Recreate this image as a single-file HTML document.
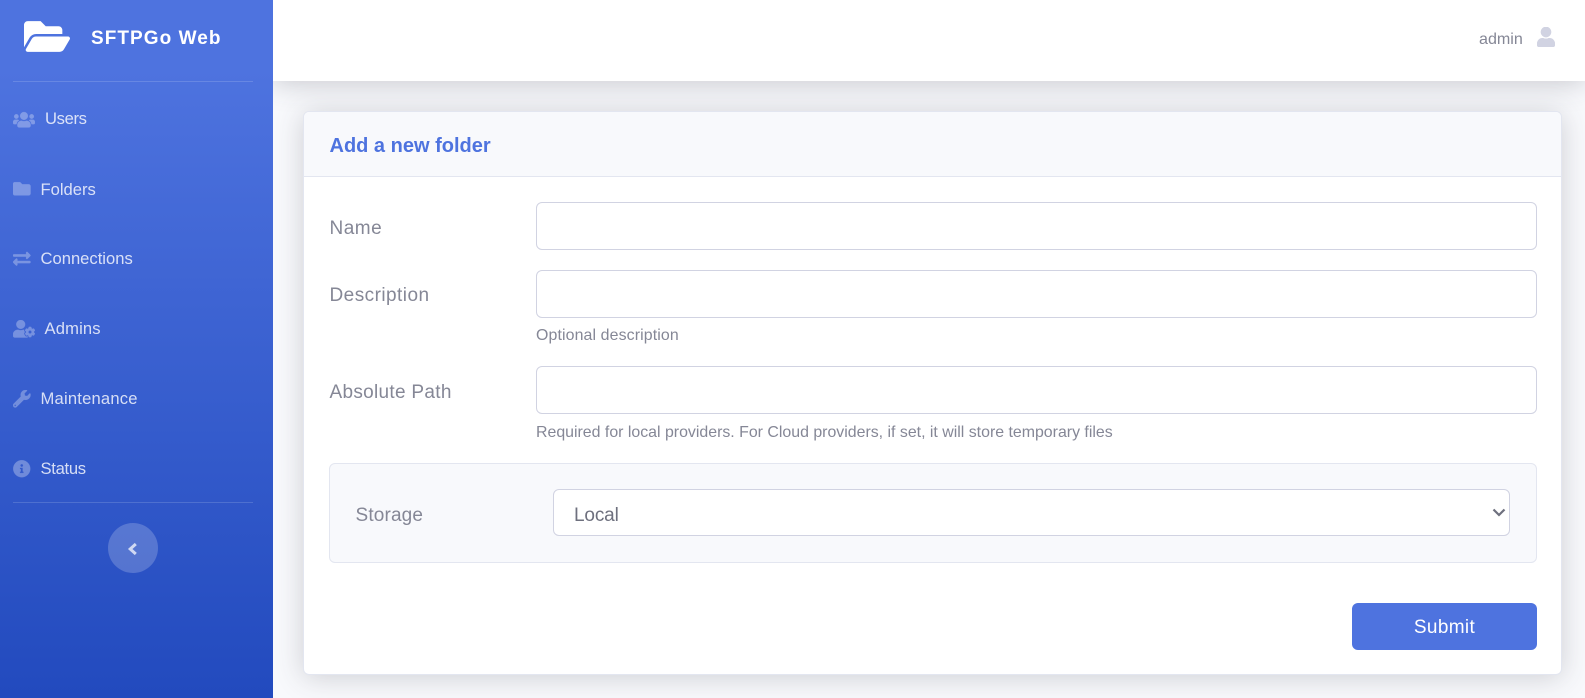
<!DOCTYPE html>
<html><head><meta charset="utf-8"><title>SFTPGo Web</title>
<style>
*{box-sizing:border-box}
html,body{margin:0;padding:0;width:1585px;height:698px;overflow:hidden;background:#f8f9fc;font-family:"Liberation Sans",sans-serif}
.a{position:absolute}
.t{position:absolute;white-space:nowrap;line-height:24px;height:24px}
#side{left:0;top:0;width:273px;height:698px;background:linear-gradient(180deg,#4e73df 10%,#224abe 100%)}
.hr{position:absolute;left:13px;width:240px;height:1px;background:rgba(255,255,255,.15)}
.nav{color:rgba(255,255,255,.8);font-size:16.6px}
svg.i{position:absolute;fill:#fff;stroke:#fff;stroke-width:10;opacity:.3}
.lab{color:#858796;font-size:19px}
.help{color:#858796;font-size:15.9px}
.in{position:absolute;background:#fff;border:1px solid #d1d3e2;border-radius:6px}
</style></head><body>
<div class="a" style="left:273px;top:0;width:1312px;height:81px;background:#fff;box-shadow:0 2px 28px rgba(58,59,69,.26)"></div>
<div class="a" id="side"></div>

<svg class="a" style="left:24px;top:15.500px;width:46px;height:41px;fill:#fff" viewBox="0 0 576 512"><path d="M572.694 292.093L500.27 416.248A63.997 63.997 0 0 1 444.989 448H45.025c-18.523 0-30.064-20.093-20.731-36.093l72.424-124.155A64 64 0 0 1 152 256h399.964c18.523 0 30.064 20.093 20.73 36.093zM152 224h328v-48c0-26.51-21.49-48-48-48H272l-64-64H48C21.49 64 0 85.49 0 112v278.046l69.077-118.418C86.214 242.25 117.989 224 152 224z"/></svg>
<div class="t" style="left:91px;top:26.500px;color:#fff;font-weight:700;font-size:19px;letter-spacing:1.05px">SFTPGo Web</div>
<div class="hr" style="top:81px"></div>

<svg class="i" style="left:13px;top:111px;width:22px;height:17.500px" viewBox="0 0 640 512"><path d="M96 224c35.300 0 64-28.700 64-64s-28.700-64-64-64-64 28.700-64 64 28.700 64 64 64zm448 0c35.300 0 64-28.700 64-64s-28.700-64-64-64-64 28.700-64 64 28.700 64 64 64zm32 32h-64c-17.600 0-33.500 7.100-45.100 18.600 40.300 22.100 68.900 62 75.100 109.400h66c17.700 0 32-14.300 32-32v-32c0-35.300-28.700-64-64-64zm-256 0c61.900 0 112-50.100 112-112S381.900 32 320 32 208 82.100 208 144s50.100 112 112 112zm76.800 32h-8.300c-20.800 10-43.900 16-68.500 16s-47.600-6-68.500-16h-8.300C179.600 288 128 339.600 128 403.200V432c0 26.500 21.500 48 48 48h288c26.500 0 48-21.500 48-48v-28.800c0-63.600-51.600-115.200-115.200-115.200zm-223.700-13.400C161.500 263.100 145.600 256 128 256H64c-35.300 0-64 28.700-64 64v32c0 17.700 14.300 32 32 32h65.900c6.300-47.400 34.900-87.300 75.200-109.400z"/></svg>
<div class="t nav" style="left:45px;top:107px;letter-spacing:-.35px">Users</div>

<svg class="i" style="left:13px;top:180px;width:17.500px;height:17.500px" viewBox="0 0 512 512"><path d="M464 128H272l-64-64H48C21.490 64 0 85.490 0 112v288c0 26.510 21.490 48 48 48h416c26.510 0 48-21.490 48-48V176c0-26.510-21.490-48-48-48z"/></svg>
<div class="t nav" style="left:40.500px;top:177.500px">Folders</div>

<svg class="i" style="left:13px;top:250px;width:17.500px;height:17.500px" viewBox="0 0 512 512"><path d="M0 168v-16c0-13.255 10.745-24 24-24h360V80c0-21.367 25.899-32.042 40.971-16.971l80 80c9.372 9.373 9.372 24.569 0 33.941l-80 80C409.956 271.982 384 261.456 384 240v-48H24c-13.255 0-24-10.745-24-24zm488 152H128v-48c0-21.314-25.862-32.080-40.971-16.971l-80 80c-9.372 9.373-9.372 24.569 0 33.941l80 80C102.057 463.997 128 453.437 128 432v-48h360c13.255 0 24-10.745 24-24v-16c0-13.255-10.745-24-24-24z"/></svg>
<div class="t nav" style="left:40.500px;top:247px">Connections</div>

<svg class="i" style="left:13px;top:320px;width:22px;height:17.500px" viewBox="0 0 640 512"><path d="M610.500 373.300c2.600-14.100 2.600-28.500 0-42.600l25.800-14.900c3-1.700 4.300-5.200 3.300-8.500-6.700-21.600-18.200-41.200-33.200-57.400-2.300-2.500-6-3.100-9-1.400l-25.800 14.900c-10.900-9.300-23.400-16.500-36.900-21.300v-29.800c0-3.400-2.400-6.400-5.700-7.100-22.300-5-45-4.800-66.200 0-3.300.7-5.700 3.700-5.700 7.100v29.800c-13.500 4.800-26 12-36.900 21.300l-25.800-14.900c-2.900-1.700-6.700-1.100-9 1.400-15 16.200-26.500 35.800-33.200 57.400-1 3.300.4 6.800 3.300 8.500l25.800 14.900c-2.600 14.100-2.600 28.500 0 42.600l-25.800 14.900c-3 1.700-4.300 5.200-3.300 8.500 6.700 21.600 18.200 41.100 33.200 57.400 2.300 2.500 6 3.100 9 1.400l25.800-14.900c10.900 9.300 23.400 16.500 36.900 21.300v29.800c0 3.400 2.400 6.400 5.700 7.100 22.300 5 45 4.800 66.200 0 3.300-.7 5.700-3.700 5.700-7.100v-29.800c13.500-4.800 26-12 36.900-21.300l25.800 14.900c2.900 1.700 6.700 1.100 9-1.400 15-16.200 26.500-35.800 33.200-57.400 1-3.300-.4-6.800-3.300-8.500l-25.800-14.900zM496 400.500c-26.800 0-48.500-21.800-48.500-48.500s21.800-48.500 48.500-48.500 48.500 21.800 48.500 48.500-21.700 48.500-48.500 48.500zM224 256c70.700 0 128-57.300 128-128S294.700 0 224 0 96 57.300 96 128s57.300 128 128 128zm201.200 226.500c-2.300-1.200-4.600-2.600-6.800-3.900l-7.900 4.600c-6 3.400-12.800 5.300-19.600 5.300-10.900 0-21.400-4.600-28.900-12.600-18.300-19.800-32.300-43.900-40.200-69.600-5.500-17.700 1.900-36.400 17.900-45.700l7.900-4.600c-.1-2.600-.1-5.200 0-7.800l-7.900-4.600c-16-9.200-23.400-28-17.900-45.700.9-2.900 2.200-5.800 3.200-8.700-3.800-.3-7.500-1.200-11.400-1.200h-16.700c-22.200 10.200-46.900 16-72.900 16s-50.600-5.800-72.900-16h-16.700C60.200 288 0 348.200 0 422.400V464c0 26.500 21.500 48 48 48h352c10.100 0 19.500-3.200 27.200-8.500-1.200-3.800-2-7.700-2-11.800v-9.200z"/></svg>
<div class="t nav" style="left:44.500px;top:317px;letter-spacing:.15px">Admins</div>

<svg class="i" style="left:13px;top:390px;width:17.500px;height:17.500px" viewBox="0 0 512 512"><path d="M507.730 109.100c-2.240-9.030-13.540-12.090-20.120-5.510l-74.360 74.360-67.880-11.310-11.310-67.880 74.360-74.360c6.620-6.620 3.430-17.900-5.660-20.160-47.380-11.740-99.550.91-136.580 37.930-39.640 39.640-50.550 97.100-34.050 147.200L18.740 402.760c-24.990 24.990-24.990 65.510 0 90.500 24.990 24.990 65.510 24.990 90.500 0l213.210-213.210c50.120 16.710 107.470 5.680 147.370-34.220 37.070-37.070 49.700-89.320 37.910-136.730zM64 472c-13.250 0-24-10.750-24-24 0-13.260 10.750-24 24-24s24 10.740 24 24c0 13.250-10.750 24-24 24z"/></svg>
<div class="t nav" style="left:40.500px;top:387px;letter-spacing:.2px">Maintenance</div>

<svg class="i" style="left:13px;top:460px;width:17.500px;height:17.500px" viewBox="0 0 512 512"><path d="M256 8C119.043 8 8 119.083 8 256c0 136.997 111.043 248 248 248s248-111.003 248-248C504 119.083 392.957 8 256 8zm0 110c23.196 0 42 18.804 42 42s-18.804 42-42 42-42-18.804-42-42 18.804-42 42-42zm56 254c0 6.627-5.373 12-12 12h-88c-6.627 0-12-5.373-12-12v-24c0-6.627 5.373-12 12-12h12v-64h-12c-6.627 0-12-5.373-12-12v-24c0-6.627 5.373-12 12-12h64c6.627 0 12 5.373 12 12v100h12c6.627 0 12 5.373 12 12v24z"/></svg>
<div class="t nav" style="left:40.500px;top:457px;letter-spacing:-.3px">Status</div>

<div class="hr" style="top:502px"></div>
<div class="a" style="left:108px;top:523px;width:50px;height:50px;border-radius:50%;background:rgba(255,255,255,.2)"></div>
<svg class="a" style="left:126px;top:541px;width:14px;height:16px" viewBox="0 0 14 16"><path d="M9.800 3L4.200 8l5.600 5" fill="none" stroke="rgba(255,255,255,.72)" stroke-width="3"/></svg>

<div class="t" style="left:1479px;top:26.500px;color:#858796;font-size:16.100px">admin</div>
<svg class="a" style="left:1537px;top:27px;width:18px;height:20px;fill:#d1d3e2;stroke:#d1d3e2;stroke-width:16" viewBox="0 0 448 512"><path d="M224 256c70.700 0 128-57.300 128-128S294.700 0 224 0 96 57.300 96 128s57.300 128 128 128zm89.600 32h-16.700c-22.200 10.200-46.900 16-72.900 16s-50.600-5.800-72.900-16h-16.700C60.200 288 0 348.200 0 422.400V464c0 26.500 21.500 48 48 48h352c26.500 0 48-21.500 48-48v-41.600c0-74.200-60.200-134.400-134.400-134.400z"/></svg>

<div class="a" style="left:303px;top:111px;width:1259px;height:564px;background:#fff;border:1px solid #e3e6f0;border-radius:6px;box-shadow:0 2.500px 28px rgba(58,59,69,.22)"></div>
<div class="a" style="left:304px;top:112px;width:1257px;height:65px;background:#f8f9fc;border-bottom:1px solid #e3e6f0;border-radius:5px 5px 0 0"></div>
<div class="t" style="left:329.500px;top:134px;color:#4e73df;font-weight:700;font-size:20px">Add a new folder</div>

<div class="t lab" style="left:329.500px;top:216.500px;letter-spacing:.5px">Name</div>
<div class="in" style="left:536px;top:202px;width:1001px;height:48px"></div>
<div class="t lab" style="left:329.500px;top:283.500px;letter-spacing:.45px">Description</div>
<div class="in" style="left:536px;top:270px;width:1001px;height:47.500px"></div>
<div class="t help" style="left:536px;top:323.500px;letter-spacing:.12px">Optional description</div>
<div class="t lab" style="left:329.500px;top:380.500px;letter-spacing:.3px">Absolute Path</div>
<div class="in" style="left:536px;top:366px;width:1001px;height:48px"></div>
<div class="t help" style="left:536px;top:420.500px">Required for local providers. For Cloud providers, if set, it will store temporary files</div>

<div class="a" style="left:329px;top:463px;width:1208px;height:100px;background:#f8f9fc;border:1px solid #e3e6f0;border-radius:6px"></div>
<div class="t lab" style="left:355.500px;top:503.500px;letter-spacing:.15px">Storage</div>
<div class="in" style="left:553px;top:489px;width:957px;height:47px"></div>
<div class="t" style="left:574px;top:503.500px;color:#6e707e;font-size:19px;letter-spacing:-.15px">Local</div>
<svg class="a" style="left:1492px;top:507px;width:14px;height:11px" viewBox="0 0 14 11"><path d="M1.500 2.500l5.500 5.500 5.500-5.500" fill="none" stroke="#6e707e" stroke-width="2.200"/></svg>

<div class="a" style="left:1352px;top:603px;width:185px;height:47px;background:#4e73df;border-radius:6px"></div>
<div class="t" style="left:1352px;top:615.500px;width:185px;text-align:center;color:#fff;font-size:19px;letter-spacing:.35px">Submit</div>
</body></html>
